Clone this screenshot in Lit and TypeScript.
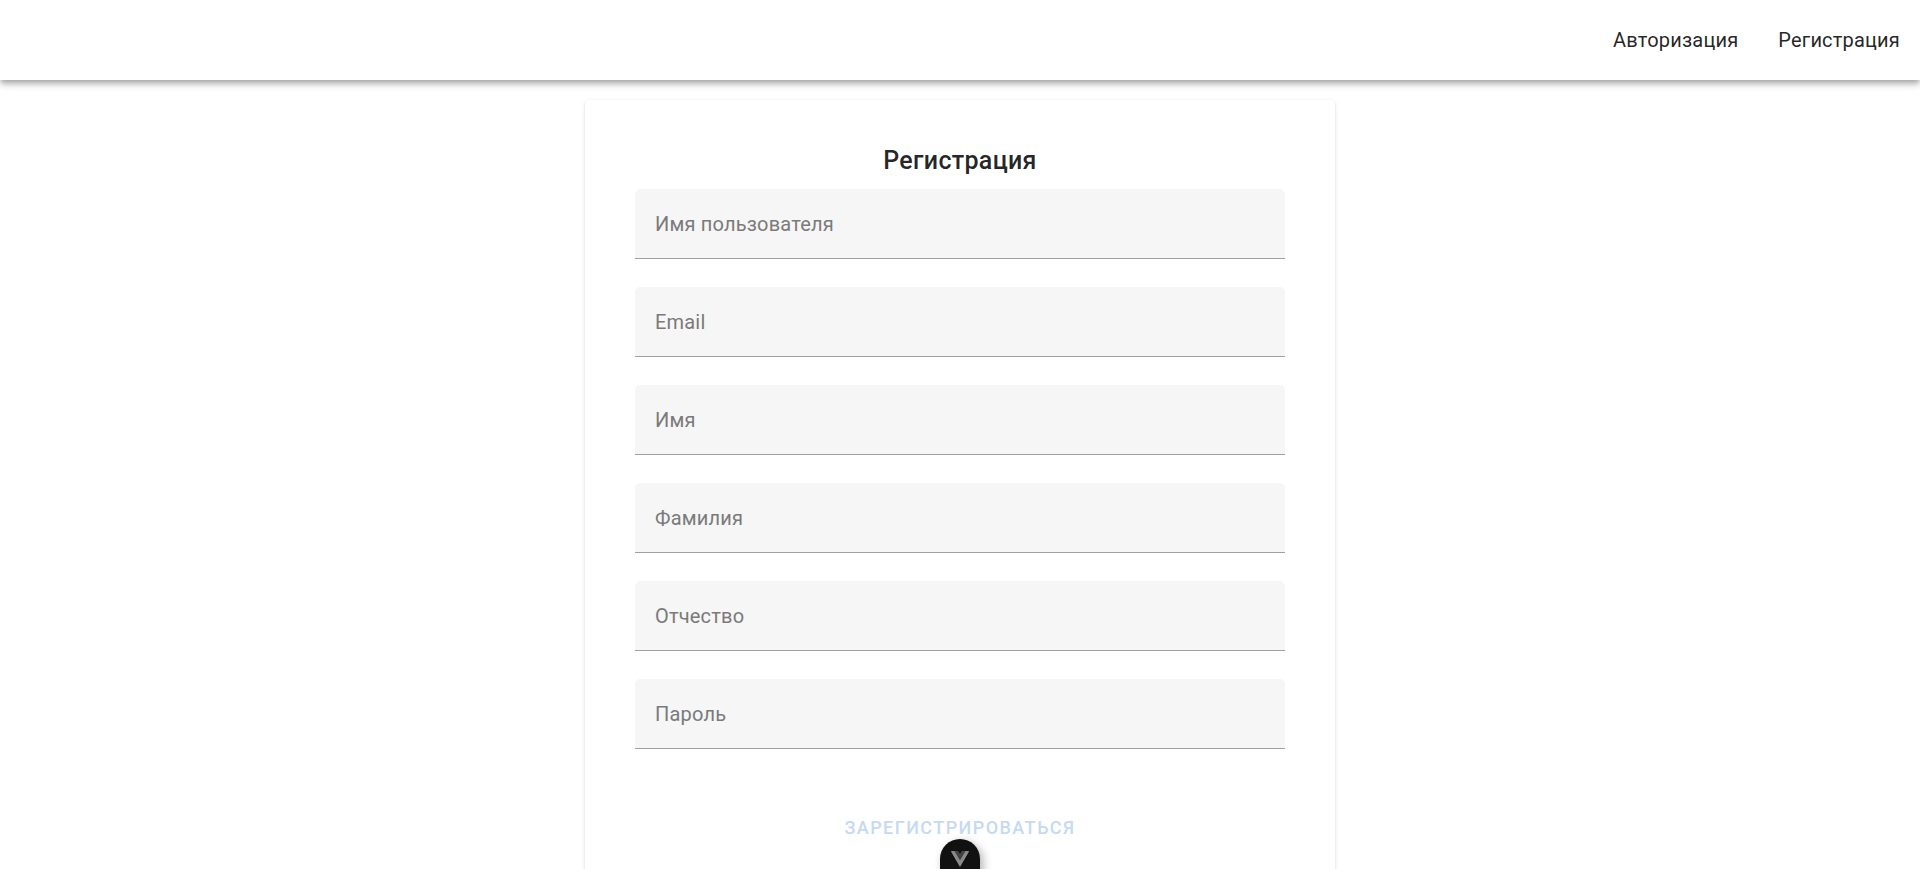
import { LitElement, html, css } from "lit";
import { customElement, state } from "lit/decorators.js";

interface Field {
  name: string;
  label: string;
  type: string;
}

const FIELDS: Field[] = [
  { name: "username", label: "Имя пользователя", type: "text" },
  { name: "email", label: "Email", type: "email" },
  { name: "firstName", label: "Имя", type: "text" },
  { name: "lastName", label: "Фамилия", type: "text" },
  { name: "patronymic", label: "Отчество", type: "text" },
  { name: "password", label: "Пароль", type: "password" },
];

@customElement("app-header")
export class AppHeader extends LitElement {
  static styles = css`
    :host {
      display: block;
    }
    .bar {
      display: flex;
      align-items: center;
      justify-content: flex-end;
      gap: 40px;
      min-height: 80px;
      padding: 0 20px;
      background: #fff;
      box-shadow:
        0 3px 5px -1px rgba(0, 0, 0, 0.2),
        0 5px 6px 0 rgba(0, 0, 0, 0.14),
        0 1px 12px 0 rgba(0, 0, 0, 0.12);
    }
    .link {
      color: rgba(0, 0, 0, 0.87);
      font-size: 20px;
      line-height: 30px;
      letter-spacing: 0.009375em;
      text-decoration: none;
    }
  `;

  render() {
    return html`
      <nav class="bar">
        <a class="link" href="#login">Авторизация</a>
        <a class="link" href="#register">Регистрация</a>
      </nav>
    `;
  }
}

@customElement("register-form")
export class RegisterForm extends LitElement {
  static styles = css`
    :host {
      display: block;
      width: 100%;
      max-width: 750px;
    }
    .card {
      display: flex;
      flex-direction: column;
      box-sizing: border-box;
      padding: 40px 50px;
      border-radius: 5px;
      background: #fff;
      box-shadow:
        0 3px 1px -2px rgba(0, 0, 0, 0.2),
        0 1px 1px 0 rgba(0, 0, 0, 0.14),
        0 1px 4px 0 rgba(0, 0, 0, 0.12);
    }
    .title {
      margin: 0;
      padding-bottom: 7px;
      color: rgba(0, 0, 0, 0.87);
      font-size: 25px;
      font-weight: 500;
      line-height: 42px;
      letter-spacing: 0.0125em;
      text-align: center;
    }
    .fields {
      display: grid;
      gap: 28px;
    }
    .field {
      display: grid;
      border-bottom: 1px solid #a0a0a0;
      border-radius: 5px 5px 0 0;
      background: #f6f6f6;
    }
    .label,
    .input {
      grid-area: 1 / 1;
      padding: 0 20px;
      font-size: 20px;
      letter-spacing: 0.009375em;
    }
    .label {
      align-self: center;
      color: #7a7a7a;
      line-height: 30px;
      pointer-events: none;
      z-index: 1;
    }
    .field.active .label {
      align-self: start;
      font-size: 15px;
    }
    .input {
      box-sizing: border-box;
      width: 100%;
      height: 69px;
      padding-top: 24px;
      border: 0;
      outline: 0;
      background: transparent;
      color: rgba(0, 0, 0, 0.87);
      font-family: inherit;
    }
    .submit {
      align-self: center;
      margin-top: 56px;
      padding: 0 20px;
      height: 45px;
      border: 0;
      border-radius: 5px;
      background: transparent;
      color: #c5daf1;
      font-family: inherit;
      font-size: 18px;
      font-weight: 500;
      letter-spacing: 0.08em;
      text-transform: uppercase;
    }
  `;

  @state() private values: Record<string, string> = {};
  @state() private focused = "";

  private onInput(name: string, event: Event) {
    this.values = { ...this.values, [name]: (event.target as HTMLInputElement).value };
  }

  render() {
    const complete = FIELDS.every((f) => this.values[f.name]);
    return html`
      <form class="card" @submit=${(e: Event) => e.preventDefault()}>
        <h1 class="title">Регистрация</h1>
        <div class="fields">
          ${FIELDS.map(
            (f) => html`
              <div class="field ${this.focused === f.name || this.values[f.name] ? "active" : ""}">
                <label class="label" for=${f.name}>${f.label}</label>
                <input
                  class="input"
                  id=${f.name}
                  name=${f.name}
                  type=${f.type}
                  @input=${(e: Event) => this.onInput(f.name, e)}
                  @focus=${() => (this.focused = f.name)}
                  @blur=${() => (this.focused = "")}
                />
              </div>
            `,
          )}
        </div>
        <button class="submit" type="submit" ?disabled=${!complete}>Зарегистрироваться</button>
      </form>
    `;
  }
}

@customElement("devtools-toggle")
export class DevtoolsToggle extends LitElement {
  static styles = css`
    :host {
      position: fixed;
      bottom: -20px;
      left: 50%;
      transform: translateX(-50%);
    }
    .toggle {
      display: flex;
      justify-content: center;
      align-items: flex-start;
      width: 40px;
      height: 50px;
      padding: 12px 0 0;
      border: 0;
      border-radius: 20px;
      background: #111;
      box-shadow: 3px 3px 10px rgba(0, 0, 0, 0.3);
    }
    .logo {
      display: block;
      width: 18px;
      height: 16px;
    }
  `;

  render() {
    return html`
      <button class="toggle" type="button" aria-label="Vue DevTools">
        <svg class="logo" viewBox="0 0 256 221" aria-hidden="true">
          <path fill="#8a8a8a" d="M204.8 0H256L128 220.8 0 0h97.92L128 51.2 157.44 0z" />
          <path fill="#8a8a8a" d="m0 0 128 220.8L256 0h-51.2L128 132.48 50.56 0z" />
          <path fill="#414141" d="M50.56 0 128 133.12 204.8 0h-47.36L128 51.2 97.92 0z" />
        </svg>
      </button>
    `;
  }
}

@customElement("app-root")
export class AppRoot extends LitElement {
  static styles = css`
    :host {
      display: flex;
      flex-direction: column;
      height: 100vh;
      overflow: hidden;
      background: #fff;
      font-family: Roboto, "Noto Sans", sans-serif;
    }
    .header {
      flex: none;
      position: relative;
      z-index: 1;
    }
    .content {
      flex: 1;
      min-height: 0;
      overflow-y: auto;
      scrollbar-width: none;
      display: flex;
      justify-content: center;
      align-items: flex-start;
      padding: 20px;
    }
  `;

  render() {
    return html`
      <app-header class="header"></app-header>
      <main class="content">
        <register-form></register-form>
      </main>
      <devtools-toggle></devtools-toggle>
    `;
  }
}
